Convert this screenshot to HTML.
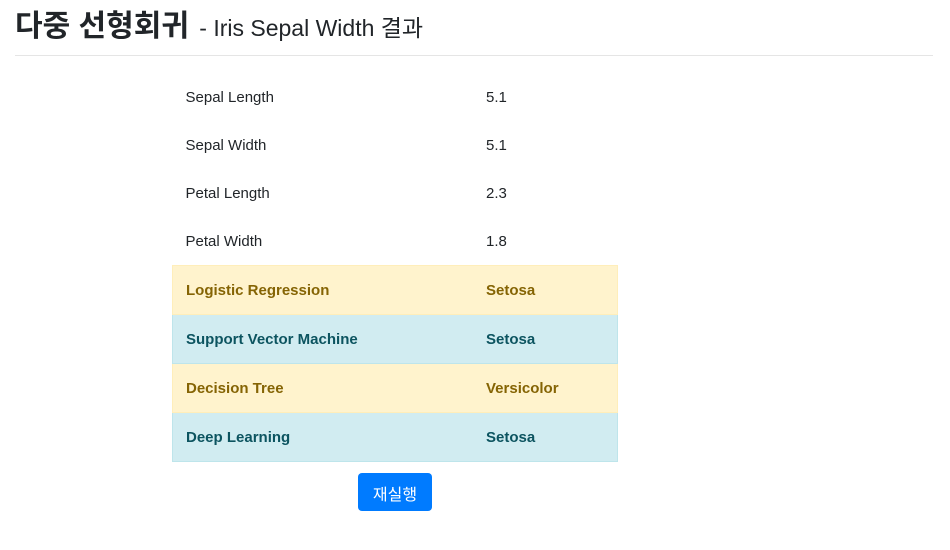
<!DOCTYPE html>
<html><head><meta charset="utf-8"><style>
body{margin:0;font-family:"Liberation Sans","Noto Sans CJK KR",sans-serif;color:#212529;background:#fff;width:950px;height:550px;overflow:hidden}
h2{position:absolute;left:15px;top:6px;margin:0;font-size:30px;font-weight:700;line-height:42px;white-space:nowrap}
h2 small{font-size:23px;font-weight:400;margin-left:2px}
.hr{position:absolute;left:15px;top:55px;width:918px;height:1px;background:#e5e5e5}
table{position:absolute;left:172px;top:73px;width:446px;border-collapse:collapse;font-size:15px}
td{height:48px;padding:0 0 0 13px;vertical-align:middle}
td:nth-child(1){width:287px}
.w td{background:#fff3cd;color:#856404;font-weight:700;border:1px solid #ffeeba;height:48px}
.i td{background:#d1ecf1;color:#0c5460;font-weight:700;border:1px solid #bee5eb;height:48px}
.w td:first-child,.i td:first-child{border-right:none}
.w td:last-child,.i td:last-child{border-left:none}
.btn{position:absolute;left:358px;top:473px;width:74px;height:38px;background:#007bff;color:#fff;border-radius:4px;font-size:16px;display:flex;align-items:center;justify-content:center;padding-top:1px;box-sizing:border-box}
</style></head><body>
<h2>다중 선형회귀 <small>- Iris Sepal Width 결과</small></h2>
<div class="hr"></div>
<table>
<tr><td>Sepal Length</td><td>5.1</td></tr>
<tr><td>Sepal Width</td><td>5.1</td></tr>
<tr><td>Petal Length</td><td>2.3</td></tr>
<tr><td>Petal Width</td><td>1.8</td></tr>
<tr class="w"><td>Logistic Regression</td><td>Setosa</td></tr>
<tr class="i"><td>Support Vector Machine</td><td>Setosa</td></tr>
<tr class="w"><td>Decision Tree</td><td>Versicolor</td></tr>
<tr class="i"><td>Deep Learning</td><td>Setosa</td></tr>
</table>
<div class="btn">재실행</div>
</body></html>
